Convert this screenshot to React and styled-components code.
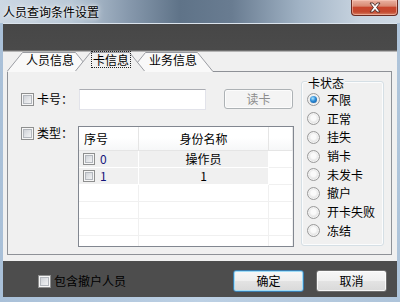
import React from "react";
import styled, { createGlobalStyle } from "styled-components";

const GlobalStyle = createGlobalStyle`
  html, body {
    margin: 0;
    padding: 0;
    background: #b9cde2;
  }
  body {
    font-family: "Noto Sans CJK SC", "Noto Sans", sans-serif;
    font-size: 12px;
    color: #000;
  }
`;

// Window chrome
const Window = styled.div`
  width: 400px;
  height: 302px;
  display: flex;
  flex-direction: column;
  background: linear-gradient(90deg, #a9c0d8, #bcd0e4 50%, #aec4da);
  overflow: hidden;
`;

const TitleBar = styled.div`
  height: 23px;
  display: flex;
  align-items: flex-start;
  justify-content: space-between;
  background: linear-gradient(
    90deg,
    #cdd8e3 0%,
    #b9c8d6 18%,
    #8799ad 32%,
    #5f7388 45%,
    #697c91 58%,
    #a1b3c5 75%,
    #c8d4e0 90%,
    #cfdae5 100%
  );
`;

const Title = styled.span`
  padding-left: 3px;
  line-height: 23px;
  font-size: 12px;
  color: #000;
  text-shadow: 0 0 6px rgba(255, 255, 255, 0.9), 0 0 3px rgba(255, 255, 255, 0.8);
`;

const CloseButton = styled.div`
  width: 45px;
  height: 15px;
  margin-right: 2px;
  display: flex;
  align-items: center;
  justify-content: center;
  border: 1px solid #6b2b22;
  border-top: none;
  border-radius: 0 0 4px 4px;
  background: linear-gradient(
    #eab2a3 0%,
    #d98a74 40%,
    #c8452d 50%,
    #c44a30 80%,
    #d8866b 100%
  );
  box-shadow: inset 0 0 0 1px rgba(255, 210, 195, 0.5);
`;

const Client = styled.div`
  flex: 1;
  margin: 0 3px 4px;
  display: flex;
  flex-direction: column;
  border-top: 1px solid #dbe4ed;
`;

const DarkBand = styled.div`
  height: 26px;
  background: linear-gradient(#474747, #4a4a4a);
  border-bottom: 1px solid #6e6e6e;
`;

const Content = styled.div`
  height: 210px;
  display: flex;
  flex-direction: column;
  padding: 0 5px 6px 4px;
  background: #f0f0f0;
  border-top: 1px solid #b4b4b4;
  box-sizing: border-box;
`;

// Tabs
const TabStrip = styled.div`
  height: 20px;
  display: flex;
  align-items: flex-end;
  position: relative;
  z-index: 2;
  margin-bottom: -1px;
`;

const TabItem = styled.div`
  position: relative;
  width: ${(p) => p.$w}px;
  height: 21px;
  margin-left: ${(p) => p.$ml}px;
  z-index: ${(p) => p.$z};
  display: flex;
  justify-content: center;
  padding: 1px 0 0 ${(p) => p.$pl || 0}px;
  box-sizing: border-box;
  cursor: default;

  > svg {
    position: absolute;
    inset: 0;
  }
`;

const TabLabel = styled.span`
  position: relative;
  line-height: 15px;
  height: 15px;
  padding: 0 1px;
  outline: ${(p) => (p.$focus ? "1px dotted #222" : "none")};
  outline-offset: 0;
`;

const Panel = styled.div`
  flex: 1;
  display: flex;
  border: 1px solid #8e9197;
  background: #f0f0f0;
`;

// Left area
const LeftArea = styled.div`
  width: 273px;
  padding: 16px 0 0 13px;
  display: flex;
  flex-direction: column;
  gap: 16px;
`;

const Row = styled.div`
  display: flex;
  align-items: ${(p) => (p.$top ? "flex-start" : "center")};
  height: ${(p) => (p.$top ? "auto" : "22px")};
`;

const Check = styled.span`
  display: inline-block;
  flex: none;
  width: ${(p) => p.$size || 13}px;
  height: ${(p) => p.$size || 13}px;
  box-sizing: border-box;
  margin-top: ${(p) => p.$mt || 0}px;
  border: 1px solid #8e8f8f;
  background: linear-gradient(135deg, #c4c8ce 0%, #e4e6e9 55%, #fbfbfb 100%);
  box-shadow: inset 0 0 0 1px #f6f6f6, inset 0 0 0 2px #b3b7bd;
`;

const FieldLabel = styled.span`
  width: ${(p) => p.$w}px;
  flex: none;
  margin-left: 3px;
  line-height: 14px;
  white-space: nowrap;
`;

const TextInput = styled.input`
  width: 127px;
  height: 21px;
  box-sizing: border-box;
  border: 1px solid #e2e3ea;
  border-top-color: #abadb3;
  background: #fff;
  padding: 0 3px;
  font: inherit;
  outline: none;
`;

const Button = styled.button`
  width: ${(p) => p.$w || 71}px;
  height: ${(p) => p.$h || 22}px;
  margin-left: ${(p) => p.$ml || 0}px;
  padding: 0;
  box-sizing: border-box;
  font-family: inherit;
  font-size: 12px;
  line-height: 14px;
  color: #000;
  border-radius: 3px;
  border: 1px solid ${(p) => (p.$primary ? "#3c7fb1" : "#707070")};
  background: linear-gradient(#f7f7f7 0%, #efefef 48%, #e3e3e3 52%, #d9d9d9 100%);
  box-shadow: inset 0 0 0 1px
    ${(p) => (p.$primary ? "#9fdcf7" : "rgba(255,255,255,0.75)")};

  &:disabled {
    color: #8d8d8d;
    border-color: #adb2b5;
    background: #f4f4f4;
    box-shadow: inset 0 0 0 1px #fcfcfc;
  }
`;

// List view
const Table = styled.div`
  width: 216px;
  height: 121px;
  flex: none;
  box-sizing: border-box;
  border: 1px solid #828790;
  background: #fff;
  overflow: hidden;
`;

const GridRow = styled.div`
  display: grid;
  grid-template-columns: 60px 130px 1fr;
  height: ${(p) => (p.$head ? 24 : 17)}px;
`;

const HeadCell = styled.div`
  display: flex;
  align-items: center;
  justify-content: ${(p) => (p.$center ? "center" : "flex-start")};
  padding-left: ${(p) => (p.$center ? 0 : 5)}px;
  border-right: 1px solid #e5e5e5;
  border-bottom: 1px solid #e5e5e5;
  background: linear-gradient(#ffffff 0%, #ffffff 45%, #f6f7f8 100%);
  line-height: 14px;
`;

const Cell = styled.div`
  display: flex;
  align-items: center;
  justify-content: ${(p) => (p.$center ? "center" : "flex-start")};
  gap: 5px;
  padding-left: ${(p) => (p.$center ? 0 : 4)}px;
  line-height: 14px;
  color: ${(p) => p.$color || "#000"};
  background: ${(p) => (p.$filled ? "#f0f0f0" : "#fff")};
  border-right: 1px solid ${(p) => (p.$filled ? "#fff" : "#f0f0f0")};
  border-bottom: 1px solid ${(p) => (p.$filled ? "#fff" : "#f0f0f0")};
`;

// Group box
const GroupBox = styled.div`
  position: relative;
  width: 83px;
  height: 165px;
  box-sizing: border-box;
  margin: 9px 0 0 7px;
  border: 1px solid #d5dfe5;
  border-radius: 3px;
  box-shadow: inset 0 0 0 1px #fbfcfd;
  padding: 8.6px 0 0 5px;
`;

const Legend = styled.span`
  position: absolute;
  top: -6px;
  left: 5px;
  padding: 0 1px;
  line-height: 14px;
  background: #f0f0f0;
`;

const RadioItem = styled.div`
  display: flex;
  align-items: center;
  gap: 7px;
  height: 18.7px;
  line-height: 14px;
`;

const Radio = styled.span`
  position: relative;
  flex: none;
  width: 13px;
  height: 13px;
  box-sizing: border-box;
  border-radius: 50%;
  border: 1px solid #9a9a9a;
  background: radial-gradient(circle at 50% 45%, #fafafa 0 30%, #e2e2e2 60%, #cfcfcf 100%);
  box-shadow: inset 0 0 0 1px #f3f3f3;

  &::after {
    content: "";
    display: ${(p) => (p.$checked ? "block" : "none")};
    position: absolute;
    left: 2px;
    top: 2px;
    width: 7px;
    height: 7px;
    border-radius: 50%;
    background: radial-gradient(circle at 40% 35%, #aee6ff 0%, #2b8ad6 45%, #0c4f93 100%);
  }
`;

// Footer
const Footer = styled.div`
  height: 36px;
  box-sizing: border-box;
  padding: 4px 10px 0 35px;
  display: flex;
  align-items: center;
  background: #4d4d4d;
`;

const FooterLabel = styled.span`
  margin-left: 3px;
  line-height: 14px;
  color: #000;
`;

const Spacer = styled.div`
  flex: 1;
`;

const tabs = [
  { label: "人员信息", w: 84, ml: 0, z: 2, pl: 2 },
  { label: "卡信息", w: 70, ml: -16, z: 3, pl: 2, active: true },
  { label: "业务信息", w: 83, ml: -15, z: 1, pl: 3 },
];

const states = ["不限", "正常", "挂失", "销卡", "未发卡", "撤户", "开卡失败", "冻结"];

const rows = [
  { no: "0", name: "操作员" },
  { no: "1", name: "1" },
];

function TabShape({ w, active }) {
  const h = 21;
  return (
    <svg width={w} height={h} viewBox={`0 0 ${w} ${h}`}>
      <polygon
        points={`0,${h} 15,1 ${w - 15},1 ${w},${h}`}
        fill={active ? "#f0f0f0" : "#f9f9f9"}
      />
      <polyline
        points={`0.5,${h - 1} 15.5,1.5 ${w - 15.5},1.5 ${w - 0.5},${h - 1}`}
        fill="none"
        stroke="#9a9ca2"
        strokeWidth="1"
      />
    </svg>
  );
}

function CloseGlyph() {
  return (
    <svg width="14" height="11" viewBox="0 0 14 11">
      <path
        d="M2 1 L5 1 L7 3.5 L9 1 L12 1 L8.6 5.5 L12 10 L9 10 L7 7.5 L5 10 L2 10 L5.4 5.5 Z"
        fill="#fff"
        stroke="#4a2a26"
        strokeWidth="0.9"
        strokeLinejoin="round"
      />
    </svg>
  );
}

export default function App() {
  return (
    <>
      <GlobalStyle />
      <Window>
        <TitleBar>
          <Title>人员查询条件设置</Title>
          <CloseButton>
            <CloseGlyph />
          </CloseButton>
        </TitleBar>
        <Client>
          <DarkBand />
          <Content>
            <TabStrip>
              {tabs.map((t) => (
                <TabItem key={t.label} $w={t.w} $ml={t.ml} $z={t.z} $pl={t.pl}>
                  <TabShape w={t.w} active={t.active} />
                  <TabLabel $focus={t.active}>{t.label}</TabLabel>
                </TabItem>
              ))}
            </TabStrip>
            <Panel>
              <LeftArea>
                <Row>
                  <Check />
                  <FieldLabel $w={42}>卡号：</FieldLabel>
                  <TextInput />
                  <Button $w={69} $h={20} $ml={18} disabled>
                    读卡
                  </Button>
                </Row>
                <Row $top>
                  <Check $mt={1} />
                  <FieldLabel $w={41}>类型：</FieldLabel>
                  <Table>
                    <GridRow $head>
                      <HeadCell>序号</HeadCell>
                      <HeadCell $center>身份名称</HeadCell>
                      <HeadCell />
                    </GridRow>
                    {rows.map((r) => (
                      <GridRow key={r.no}>
                        <Cell $filled $color="#14147a">
                          <Check $size={12} />
                          {r.no}
                        </Cell>
                        <Cell $filled $center>
                          {r.name}
                        </Cell>
                        <Cell />
                      </GridRow>
                    ))}
                    {[0, 1, 2, 3].map((i) => (
                      <GridRow key={"e" + i}>
                        <Cell />
                        <Cell />
                        <Cell />
                      </GridRow>
                    ))}
                  </Table>
                </Row>
              </LeftArea>
              <GroupBox>
                <Legend>卡状态</Legend>
                {states.map((s, i) => (
                  <RadioItem key={s}>
                    <Radio $checked={i === 0} />
                    {s}
                  </RadioItem>
                ))}
              </GroupBox>
            </Panel>
          </Content>
          <Footer>
            <Check />
            <FooterLabel>包含撤户人员</FooterLabel>
            <Spacer />
            <Button $primary>确定</Button>
            <Button $ml={12}>取消</Button>
          </Footer>
        </Client>
      </Window>
    </>
  );
}
